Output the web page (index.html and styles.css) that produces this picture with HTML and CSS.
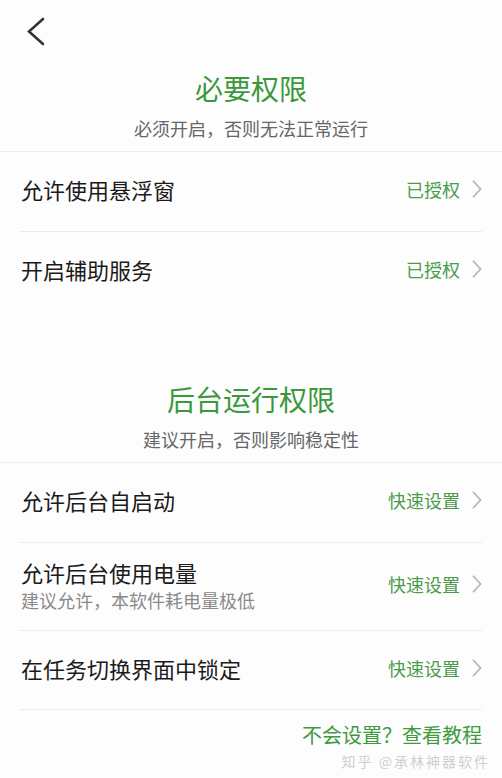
FILE: index.html
```html
<!DOCTYPE html>
<html lang="zh-CN">
<head>
    <meta charset="UTF-8">
    <meta name="viewport" content="width=device-width, initial-scale=1.0">
    <title>权限设置</title>
    <link rel="stylesheet" href="styles.css">
</head>
<body>
    <div class="page">
        <div class="nav">
            <svg class="back" width="20" height="30" viewBox="0 0 20 30">
                <polyline points="17,2 3,14.5 17,27" fill="none" stroke="#333" stroke-width="2.6" stroke-linecap="round" stroke-linejoin="miter"/>
            </svg>
        </div>

        <section class="group">
            <div class="group-head">
                <h2>必要权限</h2>
                <p>必须开启，否则无法正常运行</p>
            </div>
            <ul class="list">
                <li class="item">
                    <div class="item-text"><span class="item-title">允许使用悬浮窗</span></div>
                    <span class="item-state">已授权</span>
                    <svg class="arrow" width="10" height="18" viewBox="0 0 10 18"><polyline points="1,0.8 8.6,9 1,17.2" fill="none" stroke="#b0b0b0" stroke-width="1.5"/></svg>
                </li>
                <li class="item">
                    <div class="item-text"><span class="item-title">开启辅助服务</span></div>
                    <span class="item-state">已授权</span>
                    <svg class="arrow" width="10" height="18" viewBox="0 0 10 18"><polyline points="1,0.8 8.6,9 1,17.2" fill="none" stroke="#b0b0b0" stroke-width="1.5"/></svg>
                </li>
            </ul>
        </section>

        <section class="group">
            <div class="group-head">
                <h2>后台运行权限</h2>
                <p>建议开启，否则影响稳定性</p>
            </div>
            <ul class="list closed">
                <li class="item">
                    <div class="item-text"><span class="item-title">允许后台自启动</span></div>
                    <span class="item-state">快速设置</span>
                    <svg class="arrow" width="10" height="18" viewBox="0 0 10 18"><polyline points="1,0.8 8.6,9 1,17.2" fill="none" stroke="#b0b0b0" stroke-width="1.5"/></svg>
                </li>
                <li class="item tall">
                    <div class="item-text">
                        <span class="item-title">允许后台使用电量</span>
                        <span class="item-desc">建议允许，本软件耗电量极低</span>
                    </div>
                    <span class="item-state">快速设置</span>
                    <svg class="arrow" width="10" height="18" viewBox="0 0 10 18"><polyline points="1,0.8 8.6,9 1,17.2" fill="none" stroke="#b0b0b0" stroke-width="1.5"/></svg>
                </li>
                <li class="item">
                    <div class="item-text"><span class="item-title">在任务切换界面中锁定</span></div>
                    <span class="item-state">快速设置</span>
                    <svg class="arrow" width="10" height="18" viewBox="0 0 10 18"><polyline points="1,0.8 8.6,9 1,17.2" fill="none" stroke="#b0b0b0" stroke-width="1.5"/></svg>
                </li>
            </ul>
        </section>

        <div class="footer">
            <a class="help">不会设置？查看教程</a>
        </div>

        <div class="watermark">知乎 @承林神器软件</div>
    </div>
</body>
</html>
```

FILE: styles.css
```css
body {
    margin: 0;
    background-color: #fdfdfd;
    font-family: "Noto Sans CJK SC", "Noto Sans", sans-serif;
    color: #1a1a1a;
}

.page {
    position: relative;
    height: 778px;
    overflow: hidden;
}

.nav {
    height: 64px;
    display: flex;
    align-items: center;
    padding-left: 26px;
}

.group-head {
    padding: 6px 0 11px;
    border-bottom: 1px solid #eeeeee;
    text-align: center;
}

.group + .group { margin-top: 65px; }

.group-head h2 {
    margin: 0;
    font-size: 28px;
    line-height: 36px;
    font-weight: 400;
    color: #3b983b;
}

.group-head p {
    margin: 10px 0 0;
    font-size: 18px;
    line-height: 24px;
    color: #666;
}

.list {
    list-style: none;
    margin: 0 20px;
    padding: 0;
}

.list.closed { border-bottom: 1px solid #ececec; }

.item {
    height: 79px;
    box-sizing: border-box;
    display: flex;
    align-items: center;
    padding: 0 0 5px 1px;
}

.item + .item {
    height: 80px;
    border-top: 1px solid #ececec;
}

.item.tall { height: 88px; }

.item:last-child { height: 79px; }

.item-text {
    flex: 1;
    display: flex;
    flex-direction: column;
}

.item-title {
    font-size: 22px;
    line-height: 30px;
    color: #1a1a1a;
}

.item-desc {
    margin-top: 1px;
    font-size: 18px;
    line-height: 24px;
    color: #8a8a8a;
}

.item-state {
    font-size: 18px;
    line-height: 24px;
    color: #4b9b4b;
    margin-right: 12px;
}

.arrow { display: block; }

.footer {
    margin: 14px 20px 0;
    text-align: right;
}

.help {
    font-size: 20px;
    line-height: 22px;
    color: #3f9a3f;
}

.watermark {
    position: absolute;
    right: 12px;
    top: 751px;
    font-size: 14px;
    line-height: 20px;
    color: #cfcfcf;
    letter-spacing: 2px;
}
```
